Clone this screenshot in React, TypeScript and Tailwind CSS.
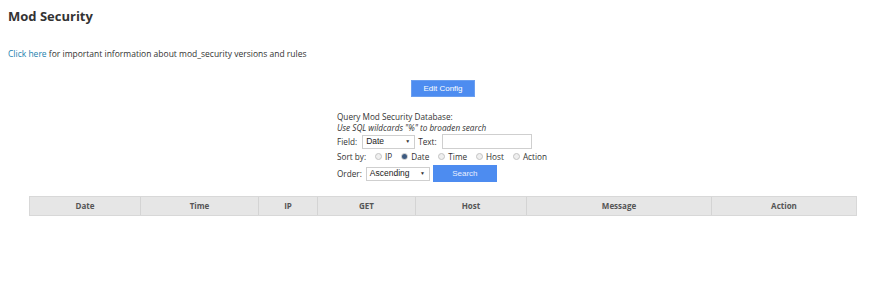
import React from 'react'

const columns = [
  { label: 'Date', w: 'w-[111px]' },
  { label: 'Time', w: 'w-[118px]' },
  { label: 'IP', w: 'w-[59px]' },
  { label: 'GET', w: 'w-[98px]' },
  { label: 'Host', w: 'w-[111px]' },
  { label: 'Message', w: 'w-[185px]' },
  { label: 'Action', w: 'flex-1' },
]

function Radio({ checked, label }: { checked?: boolean; label: string }) {
  return (
    <span className="flex shrink-0 items-center gap-[3px] mr-[9px]">
      <span className="w-[7px] h-[7px] rounded-full border border-[#c4c4c4] bg-[#efefef] flex items-center justify-center">
        {checked && <span className="w-[5px] h-[5px] rounded-full bg-[#3d5a80]" />}
      </span>
      <span>{label}</span>
    </span>
  )
}

function FakeSelect({ value, w }: { value: string; w: string }) {
  return (
    <span
      className={`${w} shrink-0 h-[14px] border border-[#cfcfcf] bg-white flex items-center justify-between pl-[3px] pr-[4px] text-[8.5px] text-[#222]`}
      style={{ fontFamily: '"Liberation Sans", Arial, sans-serif' }}
    >
      <span>{value}</span>
      <span className="text-[5px] text-[#333]">▼</span>
    </span>
  )
}

export default function App() {
  const sans = { fontFamily: '"Open Sans", "DejaVu Sans", sans-serif' }
  const arial = { fontFamily: '"Liberation Sans", Arial, sans-serif' }

  return (
    <div className="w-[871px] h-[300px] bg-white text-[#333]" style={sans}>
      <h1 className="pl-[8px] pt-[7px] text-[13px] font-bold text-[#333] leading-[18px]">Mod Security</h1>

      <p className="pl-[8px] mt-[23px] text-[8.5px] leading-[12px]">
        <a className="text-[#1d7fae]">Click here</a> for important information about mod_security versions and rules
      </p>

      <div className="flex justify-center pl-[15px] mt-[20px]">
        <button
          className="w-[64px] h-[17px] bg-[#4d8cf0] text-white text-[8px] border border-[#6b9ff0]"
          style={arial}
        >
          Edit Config
        </button>
      </div>

      <div className="flex justify-center pl-[33px] mt-[14px]">
        <div className="w-[230px] text-[8.2px] leading-[11px] whitespace-nowrap">
          <div>Query Mod Security Database:</div>
          <div className="italic">Use SQL wildcards "%" to broaden search</div>
          <div className="flex items-center h-[17px]">
            <span className="mr-[5px]">Field:</span>
            <FakeSelect value="Date" w="w-[53px]" />
            <span className="ml-[3px] mr-[5px]">Text:</span>
            <span className="w-[90px] h-[15px] border border-[#cfcfcf] bg-white" />
          </div>
          <div className="flex items-center h-[13px]">
            <span className="shrink-0 mr-[9px]">Sort by:</span>
            <Radio label="IP" />
            <Radio label="Date" checked />
            <Radio label="Time" />
            <Radio label="Host" />
            <Radio label="Action" />
          </div>
          <div className="flex items-center h-[19px] mt-[1px]">
            <span className="mr-[4px]">Order:</span>
            <FakeSelect value="Ascending" w="w-[64px]" />
            <button
              className="ml-[3px] w-[64px] h-[17px] bg-[#4d8cf0] text-[#e8efff] text-[8px]"
              style={arial}
            >
              Search
            </button>
          </div>
        </div>
      </div>

      <div className="mx-[29px] w-[828px] mt-[13px] flex h-[20px] bg-[#e6e6e6] border border-[#d8d8d8]">
        {columns.map((c, i) => (
          <div
            key={c.label}
            className={`${c.w} flex items-center justify-center text-[8px] font-bold text-[#555] ${
              i < columns.length - 1 ? 'border-r border-[#d4d4d4]' : ''
            }`}
          >
            {c.label}
          </div>
        ))}
      </div>
    </div>
  )
}
